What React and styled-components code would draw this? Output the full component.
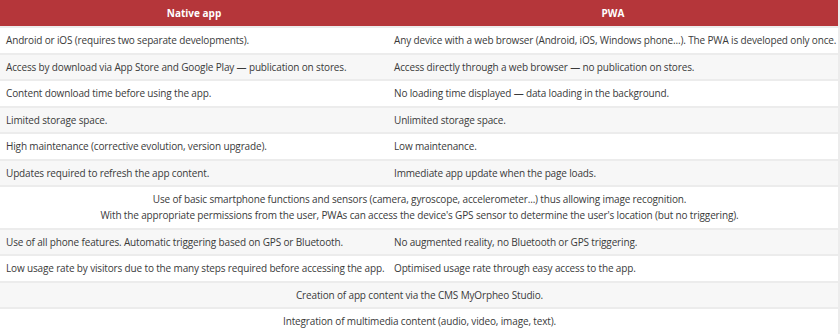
import React from "react";
import styled, { createGlobalStyle } from "styled-components";

const GlobalStyle = createGlobalStyle`
  body {
    margin: 0;
    background: #fff;
    font-family: "Open Sans", "Noto Sans", sans-serif;
  }
`;

const rows = [
  ["Android or iOS (requires two separate developments).", "Any device with a web browser (Android, iOS, Windows phone...). The PWA is developed only once."],
  ["Access by download via App Store and Google Play — publication on stores.", "Access directly through a web browser — no publication on stores."],
  ["Content download time before using the app.", "No loading time displayed — data loading in the background."],
  ["Limited storage space.", "Unlimited storage space."],
  ["High maintenance (corrective evolution, version upgrade).", "Low maintenance."],
  ["Updates required to refresh the app content.", "Immediate app update when the page loads."],
  [
    [
      "Use of basic smartphone functions and sensors (camera, gyroscope, accelerometer...) thus allowing image recognition.",
      "With the appropriate permissions from the user, PWAs can access the device's GPS sensor to determine the user's location (but no triggering).",
    ],
  ],
  ["Use of all phone features. Automatic triggering based on GPS or Bluetooth.", "No augmented reality, no Bluetooth or GPS triggering."],
  ["Low usage rate by visitors due to the many steps required before accessing the app.", "Optimised usage rate through easy access to the app."],
  [["Creation of app content via the CMS MyOrpheo Studio."]],
  [["Integration of multimedia content (audio, video, image, text)."]],
];

const Wrap = styled.div`
  width: 840px;
  padding-right: 2px;
  box-sizing: border-box;
  background: #ececec;
`;

const Table = styled.table`
  width: 838px;
  border-collapse: collapse;
  table-layout: fixed;
  font-size: 10px;
  letter-spacing: -0.15px;
  line-height: 16px;
  color: #3a3a3a;
`;

const Head = styled.th`
  background: #b5363a;
  color: #fff;
  font-weight: 700;
  text-align: center;
  height: 26px;
  padding: 0 6px;
  letter-spacing: 0;
`;

const Row = styled.tr`
  background: ${(p) => (p.$shade ? "#f7f7f7" : "#fff")};
`;

const Cell = styled.td`
  border-top: 2px solid #ececec;
  padding: 4px 5px 4.5px 6px;
  text-align: ${(p) => (p.$center ? "center" : "left")};
  vertical-align: middle;
  white-space: nowrap;
`;

export default function App() {
  return (
    <>
      <GlobalStyle />
      <Wrap>
        <Table>
          <colgroup>
            <col style={{ width: 388 }} />
            <col />
          </colgroup>
          <thead>
            <tr>
              <Head>Native app</Head>
              <Head>PWA</Head>
            </tr>
          </thead>
          <tbody>
            {rows.map((r, i) => (
              <Row key={i} $shade={i % 2 === 1}>
                {Array.isArray(r[0]) ? (
                  <Cell colSpan={2} $center>
                    {r[0].map((line, j) => (
                      <div key={j}>{line}</div>
                    ))}
                  </Cell>
                ) : (
                  <>
                    <Cell>{r[0]}</Cell>
                    <Cell>{r[1]}</Cell>
                  </>
                )}
              </Row>
            ))}
          </tbody>
        </Table>
      </Wrap>
    </>
  );
}
